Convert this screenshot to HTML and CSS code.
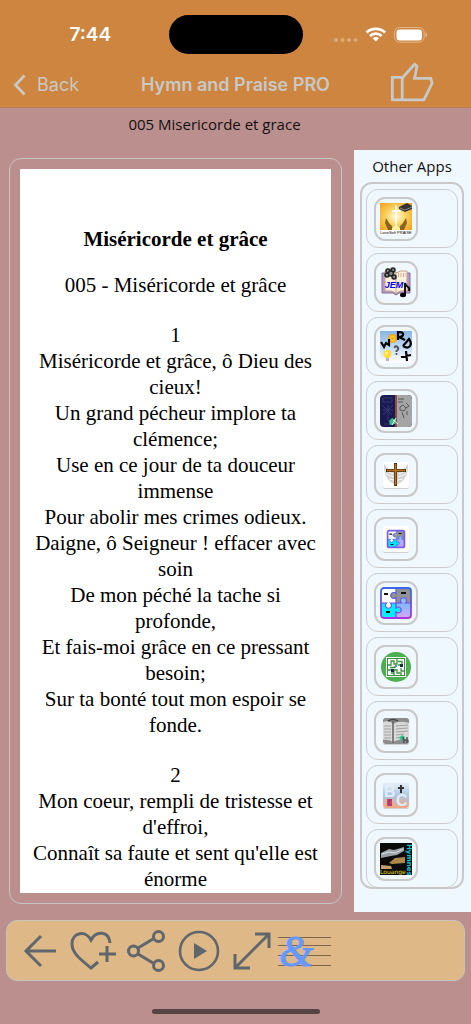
FILE: index.html
```html
<!DOCTYPE html>
<html lang="fr">
<head>
    <meta charset="UTF-8">
    <meta name="viewport" content="width=device-width, initial-scale=1.0">
    <title>Hymn and Praise PRO</title>
    <link rel="stylesheet" href="styles.css">
</head>
<body>
    <header class="header">
        <div class="status">
            <span class="time">7:44</span>
            <span class="island"></span>
            <div class="status-icons">
                <svg width="94" height="20" viewBox="0 0 94 20">
                    <g fill="#dcaa78">
                        <circle cx="2" cy="15" r="2"/><circle cx="8.5" cy="15" r="2"/><circle cx="15" cy="15" r="2"/><circle cx="21.5" cy="15" r="2"/>
                    </g>
                    <g fill="none" stroke="#fff" stroke-width="2.8">
                        <path d="M32.500 7.500a13.500 13.500 0 0 1 18.600 0"/>
                        <path d="M36 11a8.300 8.300 0 0 1 11.600 0"/>
                    </g>
                    <path d="M38.600 13.200a4.600 4.600 0 0 1 6.400 0L41.800 16.600z" fill="#fff"/>
                    <rect x="60.600" y="2.600" width="29.500" height="14.500" rx="4.600" fill="none" stroke="#e3b98f"/>
                    <rect x="62.500" y="4.500" width="25.500" height="11" rx="3" fill="#fff"/>
                    <path d="M91.500 7.500q1.800.600 1.800 2.300t-1.800 2.300z" fill="#e3b98f"/>
                </svg>
            </div>
        </div>
        <nav class="nav">
            <a class="back" href="#">
                <svg width="14" height="22" viewBox="0 0 14 22"><path d="M11.500 1.500 2.500 11l9 9.500" fill="none" stroke="currentColor" stroke-width="2.800"/></svg>
                Back
            </a>
            <h1 class="nav-title">Hymn and Praise PRO</h1>
            <button class="like" aria-label="Like">
                <svg width="44" height="42" viewBox="0 0 44 42" fill="none" stroke="currentColor" stroke-width="2.800">
                    <path d="M2.300 16.300h9.900v22.500H2.300zM12.200 17 24.600 3.200l2.400 2-2.400 12.100h16.200l1.300 4.700-8.200 16.800H12.200"/>
                </svg>
            </button>
        </nav>
    </header>

    <h2 class="song-name">005 Misericorde et grace</h2>

    <main class="content">
        <section class="reader">
            <article class="page">
                <h3>Miséricorde et grâce</h3>
                <p class="ref">005 - Miséricorde et grâce</p>
                <p class="verse">
                    1<br>
                    Miséricorde et grâce, ô Dieu des cieux!<br>
                    Un grand pécheur implore ta clémence;<br>
                    Use en ce jour de ta douceur immense<br>
                    Pour abolir mes crimes odieux.<br>
                    Daigne, ô Seigneur ! effacer avec soin<br>
                    De mon péché la tache si profonde,<br>
                    Et fais-moi grâce en ce pressant besoin;<br>
                    Sur ta bonté tout mon espoir se fonde.
                </p>
                <p class="verse">
                    2<br>
                    Mon coeur, rempli de tristesse et d'effroi,<br>
                    Connaît sa faute et sent qu'elle est énorme
                </p>
            </article>
        </section>

        <aside class="apps">
            <h2 class="apps-title">Other Apps</h2>
            <div class="apps-list">
                <!-- Praise -->
                <div class="app"><button class="app-btn" aria-label="Praise">
                    <svg width="32" height="32" viewBox="0 0 32 32">
                        <defs>
                            <radialGradient id="sun" cx=".5" cy=".5" r=".65"><stop offset="0" stop-color="#fffbe0"/><stop offset=".45" stop-color="#fbd565"/><stop offset="1" stop-color="#f2a51e"/></radialGradient>
                        </defs>
                        <rect width="32" height="32" fill="#fff"/>
                        <rect width="32" height="27" fill="url(#sun)"/>
                        <path d="M16 2v22M12 8h9" stroke="#fff" stroke-width="1.500"/>
                        <path d="M8 27 5 20l1-5 3 5 3 3 1 4zM24 27l3-7-1-5-3 5-3 3-1 4z" fill="#8c6420"/>
                        <path d="M12 25q4-5 8 0v2h-8z" fill="#fff0a0"/>
                        <path d="m19 4 8-4 5 3v3l-7 3-6-3z" fill="#333"/>
                        <path d="m20 5 5 2 7-3" stroke="#888" fill="none"/>
                        <text x="16" y="31" text-anchor="middle" class="tiny">LoveSoft PRAISE</text>
                    </svg>
                </button></div>
                <!-- JEM -->
                <div class="app"><button class="app-btn" aria-label="JEM">
                    <svg width="32" height="32" viewBox="0 0 32 32">
                        <path d="M2 6h28v20H19l-3 2-3-2H2z" fill="#b79ac3" stroke="#866c9c"/>
                        <path d="M5 4q7-1 11 2 4-3 11-2v20q-7-1-11 2-4-3-11-2z" fill="#fff0dc" stroke="#c5a58e"/>
                        <path d="M16 5v21" stroke="#c5a58e"/>
                        <path d="M18 7h8M18 9h8" stroke="#a66" stroke-dasharray="1 1.500"/>
                        <g fill="#888" stroke="#222" stroke-width="1.500">
                            <circle cx="8" cy="4" r="2"/><circle cx="13" cy="3" r="2"/><circle cx="7" cy="8" r="2"/><circle cx="11" cy="6.500" r="2.500"/><circle cx="14" cy="10" r="2"/>
                        </g>
                        <text x="14" y="21" text-anchor="middle" class="jem">JEM</text>
                        <path d="M25 28V16q1 3 3 4t1 4" fill="none" stroke="#000" stroke-width="1.800"/>
                        <ellipse cx="23" cy="28" rx="3" ry="2.200"/>
                    </svg>
                </button></div>
                <!-- Word -->
                <div class="app"><button class="app-btn" aria-label="Word">
                    <svg width="32" height="32" viewBox="0 0 32 32">
                        <defs>
                            <linearGradient id="sky" x2="0" y2="1"><stop stop-color="#87b5e8"/><stop offset="1" stop-color="#fff"/></linearGradient>
                        </defs>
                        <rect width="32" height="32" fill="url(#sky)"/>
                        <circle cx="12.500" cy="7.500" r="4.500" fill="#f6ae13"/>
                        <circle cx="12.500" cy="7.500" r="2" fill="none" stroke="#ffe14d"/>
                        <g fill="none" stroke="#000" stroke-width="2.200">
                            <path d="m1 11 3 5 2-4 3 2 0-6M18 9V1q6 0 5 3-1 2-4 2l6 3M23 15l6-7q3 4 1 7-2 3-7 0M21 26l10-2M26 20l1 10"/>
                        </g>
                        <path d="M14.500 17q1-3 3-1t-1 4v1" fill="none" stroke="#555" stroke-width="2"/>
                        <circle cx="16.500" cy="23" r="1" fill="#444"/>
                        <circle cx="7.500" cy="23" r="4" fill="#ffda38"/>
                        <circle cx="6.500" cy="22" r="1.500" fill="#fff09c"/>
                        <path d="M6 27h3v3H6z" fill="#b3b6b9"/>
                    </svg>
                </button></div>
                <!-- Bible -->
                <div class="app"><button class="app-btn" aria-label="Bible">
                    <svg width="32" height="32" viewBox="0 0 32 32">
                        <defs><clipPath id="round"><rect width="32" height="32" rx="4"/></clipPath></defs>
                        <g clip-path="url(#round)">
                            <rect width="32" height="32" fill="#1a1a50"/>
                            <path d="M17 0h15v32H17z" fill="#a3a6a4"/>
                            <path d="M15 0h2v32h-2z" fill="#8b4f45"/>
                            <path d="M3 3h9v4H3zM8 10v16M3 15h10M2 10l10 10M13 10 3 20M4 29h7" stroke="#383872" fill="none"/>
                            <path d="M18 4h6M18 7h5M26 8l3 3-3 2M20 12l3-2 3 3-2 3-4-1zM22 17l2 6M27 16v4" stroke="#55595b" fill="none"/>
                            <path d="m9 26 3-3 4 2-1 4-5 1z" fill="#35bd8c"/>
                            <path d="m13 25 5 4M16 23l-4 7" stroke="#e6fff0"/>
                        </g>
                    </svg>
                </button></div>
                <!-- Cross -->
                <div class="app"><button class="app-btn" aria-label="Cross">
                    <svg class="small" width="26" height="26" viewBox="0 0 26 26">
                        <rect width="26" height="26" rx="2" fill="#fff"/>
                        <path d="M1 2q-1 13 8 19l4 2 4-2q9-6 8-19l-6 7H7z" fill="#d4d4d2"/>
                        <path d="m2 8 8 4M3 12l8 3M6 17l5 1M24 8l-8 4M23 12l-8 3M20 17l-5 1" stroke="#f8f8f8"/>
                        <path d="M12.500 1v23M3 8.500h20" stroke="#51300e" stroke-width="3"/>
                        <path d="M12.500 2v21M4 8.500h18" stroke="#ba7422" stroke-width="1.500"/>
                    </svg>
                </button></div>
                <!-- Puzzle, small -->
                <div class="app"><button class="app-btn" aria-label="Puzzle">
                    <svg class="small" width="26" height="26" viewBox="0 0 26 26">
                        <rect width="26" height="26" rx="2" fill="#fff"/>
                        <g transform="translate(4 4) scale(.58)">
                            <rect width="31" height="31" rx="3" fill="#fff"/>
                            <path d="M16 1h14v15H16z" fill="#929292"/>
                            <path d="M1 16h15v14H1z" fill="#00eaff"/>
                            <path d="M16 16h14v14H16z" fill="#b8a9f5"/>
                            <circle cx="13" cy="9" r="3" fill="#929292"/><circle cx="23.500" cy="13.500" r="3" fill="#91c6fa"/><circle cx="18" cy="23" r="3" fill="#00eaff"/><circle cx="8" cy="18" r="3" fill="#fff"/>
                            <path d="M4 7h5M20 6h5M6 25h5" stroke="#111" stroke-width="2"/>
                            <rect x="1" y="1" width="29" height="29" rx="3" fill="none" stroke="#785cf0" stroke-width="3"/>
                            <path d="M16 1v6a3 3 0 1 0 0 4v10a3 3 0 1 1 0 4v5M1 16h5a3 3 0 1 0 4 0h11a3 3 0 1 1 4 0h5" fill="none" stroke="#5970ec" stroke-width="1.500"/>
                        </g>
                    </svg>
                </button></div>
                <!-- Puzzle -->
                <div class="app"><button class="app-btn" aria-label="Puzzle Plus">
                    <svg width="32" height="32" viewBox="0 0 32 32">
                        <defs>
                            <linearGradient id="edge" gradientUnits="userSpaceOnUse" x1="0" y1="0" x2="0" y2="32"><stop stop-color="#3868ed"/><stop offset="1" stop-color="#a936df"/></linearGradient>
                            <linearGradient id="violet" x2="0" y2="1"><stop stop-color="#7bb9ff"/><stop offset="1" stop-color="#d7a8ef"/></linearGradient>
                        </defs>
                        <rect x="1" y="1" width="30" height="30" rx="3" fill="#fff"/>
                        <path d="M16 1h15v15H16z" fill="#929292"/>
                        <path d="M1 16h15v15H1z" fill="#00efff"/>
                        <path d="M16 16h15v15H16z" fill="url(#violet)"/>
                        <circle cx="13.500" cy="8.500" r="3" fill="#929292"/><circle cx="23.500" cy="13.500" r="3" fill="#8bc0ff"/><circle cx="18" cy="23" r="3" fill="#00efff"/><circle cx="8.500" cy="18.500" r="3" fill="#fff"/>
                        <path d="M4 7h4M21 6h5M6 25h4" fill="none" stroke="#111" stroke-width="1.800"/>
                        <path d="M16 1v5.500a3 3 0 1 0 0 4V21a3 3 0 1 1 0 4v6M1 16h5.500a3 3 0 1 0 4 0h11a3 3 0 1 1 4 0H31" fill="none" stroke="url(#edge)" stroke-width="1.200"/>
                        <rect x="1" y="1" width="30" height="30" rx="3" fill="none" stroke="url(#edge)" stroke-width="1.800"/>
                    </svg>
                </button></div>
                <!-- Maze -->
                <div class="app"><button class="app-btn" aria-label="Maze">
                    <svg width="32" height="32" viewBox="0 0 32 32">
                        <circle cx="16" cy="16" r="15" fill="#4caf50"/>
                        <rect x="6" y="6" width="20" height="20" fill="#fff"/>
                        <rect x="7.500" y="7.500" width="17" height="17" fill="none" stroke="#3b9140"/>
                        <path d="M8 14h3v-4h3v3h3V8M18 10.500h4V14h-4M10 16.500h5V15M8 19h3M14 24v-5h3v3h4v2M21 17v3h3M11 22h3" fill="none" stroke="#3b9140" stroke-width="1.300"/>
                        <path d="M20 13h3v3h-3zM11 18h3v3h-3z" fill="#182d3e"/>
                        <path d="M15 14h2v2h-2z" fill="#408cff"/>
                    </svg>
                </button></div>
                <!-- Scriptures -->
                <div class="app"><button class="app-btn" aria-label="Scriptures">
                    <svg class="small" width="26" height="26" viewBox="0 0 26 26">
                        <rect width="26" height="26" rx="2" fill="#8d8d8d"/>
                        <path d="M0 4q7-2 10 2 6-4 16-1v17q-9-2-16 2-4-3-10-2z" fill="#d9d9d9"/>
                        <path d="M1 8h7M1 11h7M1 14h7M1 17h7M1 20h7M13 8l12-1M13 11l12-1M13 14l12-1M13 17l8-1M13 20l5-1" stroke="#a2a2a2"/>
                        <path d="M10 3v22" stroke="#606060" stroke-width="1.500"/>
                        <path d="M5 3q5-3 10 0" fill="none" stroke="#444" stroke-width="1.500"/>
                        <path d="m16 20 3-3 3 2-1 4-3-1" fill="#27c68a"/>
                        <path d="m20 19 1 6M24 19v6M21 22h4" stroke="#555" stroke-width="1.500"/>
                    </svg>
                </button></div>
                <!-- BC -->
                <div class="app"><button class="app-btn" aria-label="BC">
                    <svg class="small" width="26" height="26" viewBox="0 0 26 26">
                        <defs><linearGradient id="dawn" x2="0" y2="1"><stop stop-color="#edf3f8"/><stop offset=".5" stop-color="#a9c8e6"/><stop offset="1" stop-color="#f3a582"/></linearGradient></defs>
                        <rect width="26" height="26" rx="3" fill="url(#dawn)"/>
                        <text x="1" y="15" class="letter">B</text>
                        <text x="13" y="24" class="letter">C</text>
                        <path d="M18 3v8M15 6h6" stroke="#333" stroke-width="2"/>
                        <path d="M4 17h5v7H4z" fill="#e83e3e"/>
                        <path d="M9 18H6v5h3" fill="none" stroke="#713bb9"/>
                    </svg>
                </button></div>
                <!-- Louanges -->
                <div class="app"><button class="app-btn" aria-label="Louange">
                    <svg width="32" height="32" viewBox="0 0 32 32">
                        <rect width="32" height="32" fill="#0b0b09"/>
                        <path d="m1 10 8-4 5 1 10-3v4l-7 4-6 1-10 2z" fill="#9ba1a5"/>
                        <path d="m2 11 7-2 6 1 8-4" fill="none" stroke="#dce3e7"/>
                        <path d="m9 20 6-5 10-1v6l-13 1z" fill="#ad894a"/>
                        <path d="m1 22 10 1 1 3H1z" fill="#c89f68"/>
                        <text x="0" y="31" class="louange">Louange</text>
                        <text transform="translate(27 1) rotate(90)" class="hymnes">Hymnes</text>
                    </svg>
                </button></div>
            </div>
        </aside>
    </main>

    <footer class="toolbar">
        <button class="tool" aria-label="Previous">
            <svg width="34" height="44" viewBox="0 0 34 44"><path d="M18 7 3 22l15 15M3 22h30" fill="none" stroke="currentColor" stroke-width="3"/></svg>
        </button>
        <button class="tool" aria-label="Add to favorites">
            <svg width="46" height="44" viewBox="0 0 46 44" fill="none" stroke="currentColor" stroke-width="3"><path d="M40 14C39 2 26 1 21 11 16 1 2 3 2 15c0 9 8 15 19 24l7-6M37 17v16M29 25h17"/></svg>
        </button>
        <button class="tool" aria-label="Share">
            <svg width="38" height="44" viewBox="0 0 38 44" fill="none" stroke="currentColor" stroke-width="3"><path d="m11 19 15-9M11 25l15 9"/><circle cx="6.500" cy="22" r="5"/><circle cx="31.500" cy="7.500" r="5"/><circle cx="31.500" cy="36.500" r="5"/></svg>
        </button>
        <button class="tool" aria-label="Play">
            <svg width="42" height="44" viewBox="0 0 42 44"><circle cx="21" cy="22" r="19" fill="none" stroke="currentColor" stroke-width="2.600"/><path d="m16 14 13 8-13 8z" fill="currentColor"/></svg>
        </button>
        <button class="tool" aria-label="Full screen">
            <svg width="38" height="44" viewBox="0 0 38 44" fill="none" stroke="currentColor" stroke-width="3"><path d="m2 39 34-34M22 5h14v14M2 25v14h15"/></svg>
        </button>
        <button class="tool" aria-label="Music sheet">
            <svg width="53" height="56" viewBox="0 0 53 56"><path d="M0 14.500h53M0 22.500h53M0 32.500h53M0 42.500h53" stroke="#7d6748"/><text x="1" y="43" class="clef">&amp;</text></svg>
        </button>
    </footer>
    <div class="home-bar"></div>
</body>
</html>
```
FILE: styles.css
```css
* {
    box-sizing: border-box;
}
body {
    margin: 0;
    height: 100vh;
    display: flex;
    flex-direction: column;
    background-color: #bc8f8f;
    font-family: "Open Sans", "Noto Sans", sans-serif;
    color: #111;
}
h1, h2, h3, p {
    margin: 0;
}
button {
    padding: 0;
    border: none;
    background: none;
    color: inherit;
    cursor: pointer;
}
svg {
    display: block;
}

/* header */
.header {
    background-color: #cd853f;
    border-bottom: 1px solid #b67f5c;
    color: #c8c8c8;
    font-family: Inter, sans-serif;
}
.status {
    display: grid;
    grid-template-columns: 1fr 134px 1fr;
    align-items: center;
    padding-top: 15px;
}
.time {
    padding-left: 12px;
    text-align: center;
    color: #fff;
    font-size: 19px;
    font-weight: 600;
}
.island {
    height: 39px;
    border-radius: 20px;
    background-color: #000;
}
.status-icons {
    padding-left: 31px;
}
.nav {
    display: grid;
    grid-template-columns: 1fr auto 1fr;
    align-items: center;
    height: 53px;
    padding: 0 37px 0 13px;
}
.back {
    display: flex;
    align-items: center;
    gap: 10px;
    margin-top: 8px;
    color: inherit;
    font-size: 18px;
    text-decoration: none;
}
.nav-title {
    margin: 8px -24px 0 0;
    font-size: 18px;
    font-weight: 600;
}
.like {
    justify-self: end;
    margin-top: 2px;
}

.song-name {
    padding: 0 42px 10px 0;
    font-size: 15px;
    font-weight: 400;
    line-height: 32px;
    text-align: center;
}

/* hymn text */
.content {
    display: flex;
    flex: 1;
    min-height: 0;
}
.reader {
    flex: 1;
    min-width: 0;
    margin: 8px 12px 8px 9px;
    padding: 10px;
    border: 1px solid #c8c4c4;
    border-radius: 12px;
}
.page {
    height: 100%;
    padding: 57px 10px 0;
    overflow-y: auto;
    scrollbar-width: none;
    background-color: #fff;
    color: #000;
    font-family: "Liberation Serif", serif;
    font-size: 21px;
    line-height: 26px;
    text-align: center;
}
.page h3 {
    font-size: 21px;
}
.ref {
    margin: 20px 0 24px;
}
.verse {
    margin-bottom: 24px;
}

/* other apps */
.apps {
    display: flex;
    flex-direction: column;
    width: 117px;
    padding: 0 7px 23px 6px;
    background-color: #f0f8ff;
}
.apps-title {
    font-size: 15px;
    font-weight: 400;
    line-height: 32px;
    text-align: center;
}
.apps-list {
    display: flex;
    flex: 1;
    flex-direction: column;
    gap: 5px;
    min-height: 0;
    padding: 5px 4px;
    overflow-y: auto;
    scrollbar-width: none;
    border: 2px solid #c8c8c8;
    border-radius: 12px;
}
.app {
    flex: none;
    height: 59px;
    padding: 7px;
    border: 1px solid #ccc;
    border-radius: 12px;
}
.app-btn {
    display: grid;
    place-items: center;
    width: 44px;
    height: 44px;
    border: 2px solid #c8c8c8;
    border-radius: 11px;
}
.small {
    border-radius: 2px;
    box-shadow: 0 1px 1px #ccc;
}
.tiny {
    font-family: "Liberation Sans", sans-serif;
    font-size: 4px;
}
.jem {
    fill: #0000f0;
    font: italic bold 9px "Liberation Sans", sans-serif;
}
.letter {
    fill: #e0edf8;
    font: bold 16px "Liberation Sans", sans-serif;
}
.louange {
    fill: #e8df16;
    font: 6px "DejaVu Sans", sans-serif;
}
.hymnes {
    fill: #18c5cf;
    font: bold 7px "DejaVu Sans", sans-serif;
}

/* bottom bar */
.toolbar {
    display: flex;
    flex: none;
    align-items: center;
    height: 61px;
    margin: 8px 6px 0;
    padding-left: 6px;
    border: 1px solid #c8c4bc;
    border-radius: 11px;
    background-color: #deb887;
    color: #5f666c;
}
.tool {
    display: grid;
    place-items: center;
    width: 53px;
}
.clef {
    fill: #6699ff;
    stroke: #6699ff;
    font: italic 44px "Liberation Serif", serif;
}
.home-bar {
    flex: none;
    width: 168px;
    height: 5px;
    margin: 28px auto 10px;
    border-radius: 3px;
    background-color: #584343;
}
```
